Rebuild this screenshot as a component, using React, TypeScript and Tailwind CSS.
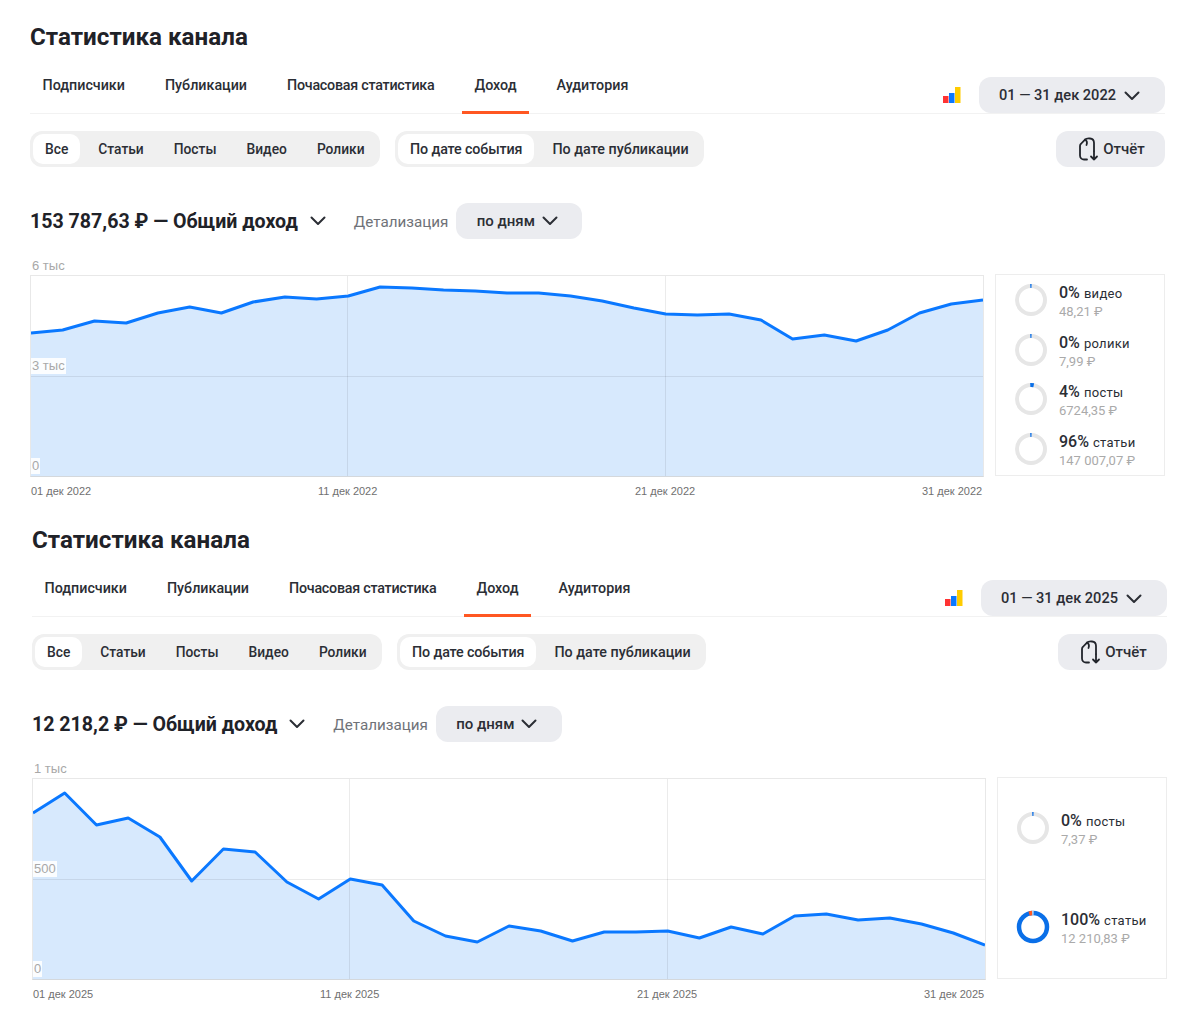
type Ring = { pct: string; label: string; sum: string; full?: boolean; tick?: number }

type Report = {
  period: string
  total: string
  ticks: string[]
  yTop: string
  yMid: string
  line: number[]
  rings: Ring[]
  shift: string
}

const reports: Report[] = [
  {
    period: '01 — 31 дек 2022',
    total: '153 787,63 ₽ — Общий доход',
    ticks: ['01 дек 2022', '11 дек 2022', '21 дек 2022', '31 дек 2022'],
    yTop: '6 тыс',
    yMid: '3 тыс',
    line: [57, 54, 45, 47, 37, 31, 37, 26, 21, 23, 20, 11, 12, 14, 15, 17, 17, 20, 25, 32, 38, 39, 38, 44, 63, 59, 65, 54, 37, 28, 24],
    rings: [
      { pct: '0%', label: 'видео', sum: '48,21 ₽' },
      { pct: '0%', label: 'ролики', sum: '7,99 ₽' },
      { pct: '4%', label: 'посты', sum: '6724,35 ₽', tick: 4 },
      { pct: '96%', label: 'статьи', sum: '147 007,07 ₽' },
    ],
    shift: 'pl-[30px] pr-[35px]',
  },
  {
    period: '01 — 31 дек 2025',
    total: '12 218,2 ₽ — Общий доход',
    ticks: ['01 дек 2025', '11 дек 2025', '21 дек 2025', '31 дек 2025'],
    yTop: '1 тыс',
    yMid: '500',
    line: [34, 14, 46, 39, 58, 102, 70, 73, 103, 120, 100, 106, 142, 157, 163, 147, 152, 162, 153, 153, 152, 159, 148, 155, 137, 135, 141, 139, 145, 154, 166],
    rings: [
      { pct: '0%', label: 'посты', sum: '7,37 ₽' },
      { pct: '100%', label: 'статьи', sum: '12 210,83 ₽', full: true },
    ],
    shift: 'pl-[32px] pr-[33px]',
  },
]

function Chevron({ className = '' }: { className?: string }) {
  return (
    <svg width="16" height="10" viewBox="0 0 16 10" fill="none" stroke="#2b2e35" strokeWidth="2" strokeLinecap="round" strokeLinejoin="round" className={className}>
      <path d="M1.500 1.500 8 8l6.500-6.500" />
    </svg>
  )
}

function BarsIcon() {
  return (
    <svg width="18" height="16" viewBox="0 0 18 16" className="mb-[10px]">
      <rect x="0" y="9" width="5.500" height="7" fill="#ff3333" />
      <rect x="6" y="6" width="5.500" height="10" fill="#0a78ff" />
      <rect x="12" y="0" width="5.500" height="16" fill="#ffcc00" />
    </svg>
  )
}

function ReportIcon() {
  return (
    <svg width="22" height="24" viewBox="0 0 22 24" fill="none" stroke="#21242b" strokeWidth="1.800" strokeLinecap="round" strokeLinejoin="round">
      <path d="M10 22.500H7c-2.200 0-4-1.800-4-4V9c0-.8.300-1.500.8-2l4-4.200C9 1.500 11 1.300 13 1.500c2.500.2 4 2 4 4.500v8" />
      <path d="M8 2.500c1.500 1 2.500 3 1.500 5.500" />
      <path d="M17 14.500v8M14 19.500l3 3 3-3" />
    </svg>
  )
}

function Donut({ ring }: { ring: Ring }) {
  const r = 14
  const c = 2 * Math.PI * r
  if (ring.full) {
    return (
      <svg width="34" height="34" viewBox="0 0 34 34" className="shrink-0">
        <circle cx="17" cy="17" r={r} fill="none" stroke="#0a6fe8" strokeWidth="4.500" />
        <circle cx="17" cy="17" r={r} fill="none" stroke="#ff5722" strokeWidth="4.500" strokeDasharray={`${c * 0.035} ${c}`} transform="rotate(-106 17 17)" />
        <circle cx="17" cy="17" r={r} fill="none" stroke="#e5e5e5" strokeWidth="4.500" strokeDasharray={`${c * 0.015} ${c}`} transform="rotate(-93 17 17)" />
      </svg>
    )
  }
  const tick = ring.tick ?? 1.5
  return (
    <svg width="34" height="34" viewBox="0 0 34 34" className="shrink-0">
      <circle cx="17" cy="17" r={r} fill="none" stroke="#e6e6e6" strokeWidth="4" />
      <circle cx="17" cy="17" r={r} fill="none" stroke="#0a6fe8" strokeWidth="4" strokeDasharray={`${(c * tick) / 100} ${c}`} transform="rotate(-93 17 17)" />
    </svg>
  )
}

function Chart({ line, yTop, yMid }: { line: number[]; yTop: string; yMid: string }) {
  const w = 952
  const h = 200
  const step = w / (line.length - 1)
  const pts = line.map((y, i) => `${(i * step).toFixed(1)},${y}`).join(' ')
  return (
    <div className="relative h-[202px] border border-[#e8e8e8] border-b-[#d4d8dc] bg-white font-['Liberation_Sans',sans-serif]">
      <svg width={w} height={h} viewBox={`0 0 ${w} ${h}`} className="block">
        <polygon points={`0,${h} ${pts} ${w},${h}`} fill="#d7e9fd" />
        <line x1="0" x2={w} y1="100.500" y2="100.500" stroke="#000" strokeOpacity="0.08" />
        <line x1="316.500" x2="316.500" y1="0" y2={h} stroke="#000" strokeOpacity="0.08" />
        <line x1="634.500" x2="634.500" y1="0" y2={h} stroke="#000" strokeOpacity="0.08" />
        <polyline points={pts} fill="none" stroke="#0a78ff" strokeWidth="3" strokeLinejoin="round" />
      </svg>
      <span className="absolute -top-[18px] left-[1px] text-[13px] leading-[16px] text-[#a8a8a8]">{yTop}</span>
      <span className="absolute left-0 top-[82px] bg-white/90 px-[1px] text-[13px] leading-[16px] text-[#a8a8a8]">{yMid}</span>
      <span className="absolute bottom-[2px] left-0 bg-white/90 px-[1px] text-[13px] leading-[16px] text-[#a8a8a8]">0</span>
    </div>
  )
}

function Block({ report }: { report: Report }) {
  const tabs = ['Подписчики', 'Публикации', 'Почасовая статистика', 'Доход', 'Аудитория']
  const kinds = ['Статьи', 'Посты', 'Видео', 'Ролики']
  return (
    <section className={`h-[503px] pt-[21px] ${report.shift}`}>
      <h1 className="text-[24.200px] font-bold leading-[32px] text-[#1f2228]">Статистика канала</h1>

      <div className="mt-[15px] flex h-[46px] items-start border-b border-[#f2f2f2]">
        {tabs.map((t) => (
          <div key={t} className={`mr-[15px] h-[46px] px-[12.500px] pt-[6px] text-[14.300px] font-medium leading-[22px] text-[#2b2e35] ${t === 'Доход' ? 'border-b-[3px] border-[#ff5722]' : ''} ${t === 'Почасовая статистика' ? 'tracking-[-0.25px]' : ''}`}>
            {t}
          </div>
        ))}
        <div className="ml-auto flex h-[36px] items-end gap-[18px] self-end">
          <BarsIcon />
          <button className="flex h-[36px] w-[186px] items-center justify-center gap-[8px] rounded-[12px] bg-[#ebecf0] pr-[5px] pt-[1px] text-[14.600px] font-medium text-[#2b2e35]">
            {report.period}
            <Chevron />
          </button>
        </div>
      </div>

      <div className="mt-[17px] flex items-center gap-[15px]">
        <div className="flex h-[36px] w-[350px] items-center gap-[30px] rounded-[12px] bg-[#f0f0f0] p-[3px] pr-0 text-[13.800px] font-medium text-[#2b2e35]">
          <span className="-mr-[12px] flex h-[30px] items-center rounded-[10px] bg-white px-[12px] pt-[1px]">Все</span>
          {kinds.map((k) => (
            <span key={k} className="pt-[1px]">{k}</span>
          ))}
        </div>
        <div className="flex h-[36px] items-center gap-[18px] rounded-[12px] bg-[#f0f0f0] p-[3px] text-[14.300px] font-medium text-[#2b2e35]">
          <span className="flex h-[30px] items-center rounded-[10px] bg-white px-[12px] pt-[1px] tracking-[-0.13px]">По дате события</span>
          <span className="pr-[12px] pt-[1px]">По дате публикации</span>
        </div>
        <button className="ml-auto flex h-[36px] w-[109px] items-center justify-center gap-[4px] rounded-[12px] bg-[#ebecf0] pl-[1px] text-[15px] font-medium text-[#2b2e35]">
          <ReportIcon />
          Отчёт
        </button>
      </div>

      <div className="mt-[36px] flex h-[36px] items-center">
        <span className="pt-[2px] text-[19.600px] font-bold text-[#1f2228]">{report.total}</span>
        <Chevron className="ml-[12px]" />
        <span className="ml-[28px] pt-[2px] text-[15.200px] text-[#6f7278]">Детализация</span>
        <button className="ml-[8px] flex h-[36px] w-[126px] items-center justify-center gap-[7px] rounded-[12px] bg-[#ebecf0] pr-[4px] text-[15px] font-medium text-[#2b2e35]">
          по дням
          <Chevron />
        </button>
      </div>

      <div className="mt-[36px] flex items-start gap-[11px]">
        <div className="w-[954px]">
          <Chart line={report.line} yTop={report.yTop} yMid={report.yMid} />
          <div className="mt-[7px] grid grid-cols-[287px_317px_287px_1fr] pl-[1px] font-['Liberation_Sans',sans-serif] text-[11px] leading-[14px] text-[#707070]">
            {report.ticks.map((t) => (
              <span key={t}>{t}</span>
            ))}
          </div>
        </div>
        <div className="-mt-[1px] flex h-[202px] flex-1 flex-col justify-around border border-[#ededed] pb-[1px] pl-[18px]">
          {report.rings.map((r) => (
            <div key={r.label} className="flex items-center gap-[11px]">
              <Donut ring={r} />
              <div className="mt-[5px]">
                <div className="flex items-baseline gap-[4px] leading-[18px] text-[#2b2e35]">
                  <span className="text-[16px] font-medium">{r.pct}</span>
                  <span className="text-[13px] tracking-[0.3px]">{r.label}</span>
                </div>
                <div className="text-[13px] leading-[18px] text-[#aaaaaa]">{r.sum}</div>
              </div>
            </div>
          ))}
        </div>
      </div>
    </section>
  )
}

export default function App() {
  return (
    <div className="h-[1024px] w-[1200px] overflow-hidden bg-white font-['Roboto','Noto_Sans',sans-serif]">
      {reports.map((r) => (
        <Block key={r.period} report={r} />
      ))}
    </div>
  )
}
